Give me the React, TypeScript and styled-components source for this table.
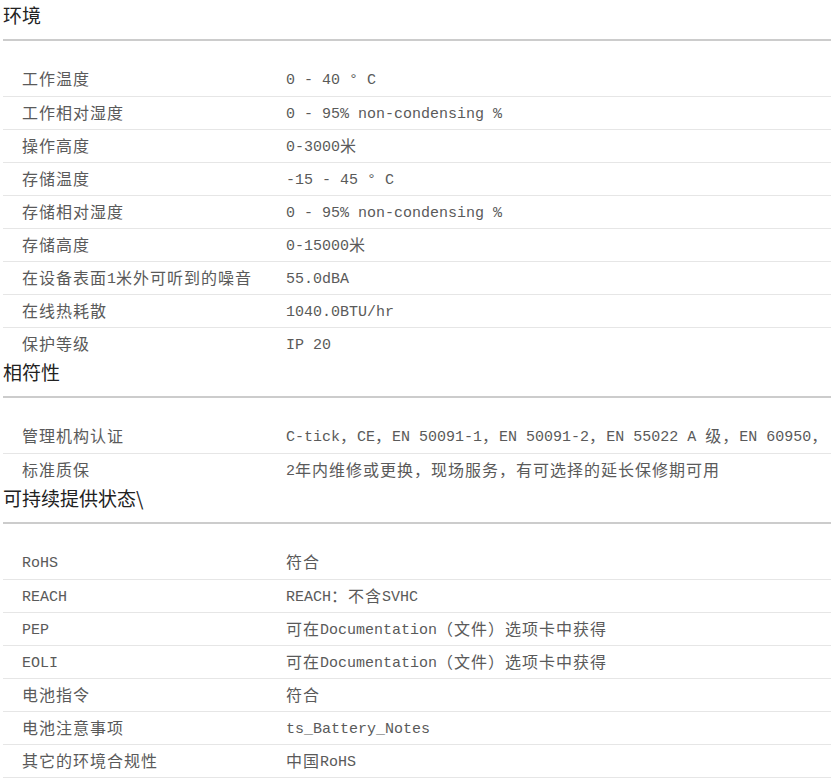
import React from "react";
import styled, { createGlobalStyle } from "styled-components";

const Global = createGlobalStyle`
  html, body { margin: 0; padding: 0; background: #fff; }
  body { font-family: "Noto Sans CJK SC", "Liberation Sans", sans-serif; }
`;

const Page = styled.div`
  padding: 3px 0 0 3px;
  width: 828px;
`;

const Section = styled.section`
  display: flex;
  flex-direction: column;
`;

const Heading = styled.h3`
  margin: 0;
  font-family: "Noto Sans CJK SC", "Liberation Sans", sans-serif;
  font-weight: 400;
  font-size: 19px;
  line-height: 24px;
  color: #222;
  padding-bottom: 12px;
  border-bottom: 2px solid #cccccc;
`;

const Table = styled.div`
  margin-top: 22px;
  display: flex;
  flex-direction: column;
`;

const Row = styled.div`
  display: grid;
  grid-template-columns: 264px 1fr;
  align-items: center;
  box-sizing: border-box;
  height: 33px;
  padding-left: 19px;
  padding-bottom: 3px;
  border-top: 1px solid #e6e6e6;
  &:first-child { border-top: none; }
  white-space: nowrap;
  overflow: hidden;
`;

const Cell = styled.div`
  font-family: "Noto Sans CJK SC", sans-serif;
  font-size: 16px;
  letter-spacing: 1px;
  color: #5a5a5a;
  overflow: hidden;
`;

const Latin = styled.span`
  font-family: "Liberation Mono", monospace;
  font-size: 15px;
  letter-spacing: 0;
  vertical-align: 1px;
`;

function Mixed({ text }: { text: string }) {
  const parts = text.match(/[\u0000-\u00ff]+|[^\u0000-\u00ff]+/g) || [];
  return (
    <>
      {parts.map((p, i) =>
        /^[\u0000-\u00ff]/.test(p) ? <Latin key={i}>{p}</Latin> : <React.Fragment key={i}>{p}</React.Fragment>
      )}
    </>
  );
}

type Data = { title: string; rows: [string, string][] };

const sections: Data[] = [
  {
    title: "环境",
    rows: [
      ["工作温度", "0 - 40 ° C"],
      ["工作相对湿度", "0 - 95% non-condensing %"],
      ["操作高度", "0-3000米"],
      ["存储温度", "-15 - 45 ° C"],
      ["存储相对湿度", "0 - 95% non-condensing %"],
      ["存储高度", "0-15000米"],
      ["在设备表面1米外可听到的噪音", "55.0dBA"],
      ["在线热耗散", "1040.0BTU/hr"],
      ["保护等级", "IP 20"],
    ],
  },
  {
    title: "相符性",
    rows: [
      ["管理机构认证", "C-tick，CE，EN 50091-1，EN 50091-2，EN 55022 A 级，EN 60950，"],
      ["标准质保", "2年内维修或更换，现场服务，有可选择的延长保修期可用"],
    ],
  },
  {
    title: "可持续提供状态\\",
    rows: [
      ["RoHS", "符合"],
      ["REACH", "REACH：不含SVHC"],
      ["PEP", "可在Documentation（文件）选项卡中获得"],
      ["EOLI", "可在Documentation（文件）选项卡中获得"],
      ["电池指令", "符合"],
      ["电池注意事项", "ts_Battery_Notes"],
      ["其它的环境合规性", "中国RoHS"],
      ["", ""],
    ],
  },
];

export default function App() {
  return (
    <>
      <Global />
      <Page>
        {sections.map((s) => (
          <Section key={s.title}>
            <Heading>{s.title}</Heading>
            <Table>
              {s.rows.map(([k, v], i) => (
                <Row key={i}>
                  <Cell><Mixed text={k} /></Cell>
                  <Cell><Mixed text={v} /></Cell>
                </Row>
              ))}
            </Table>
          </Section>
        ))}
      </Page>
    </>
  );
}
